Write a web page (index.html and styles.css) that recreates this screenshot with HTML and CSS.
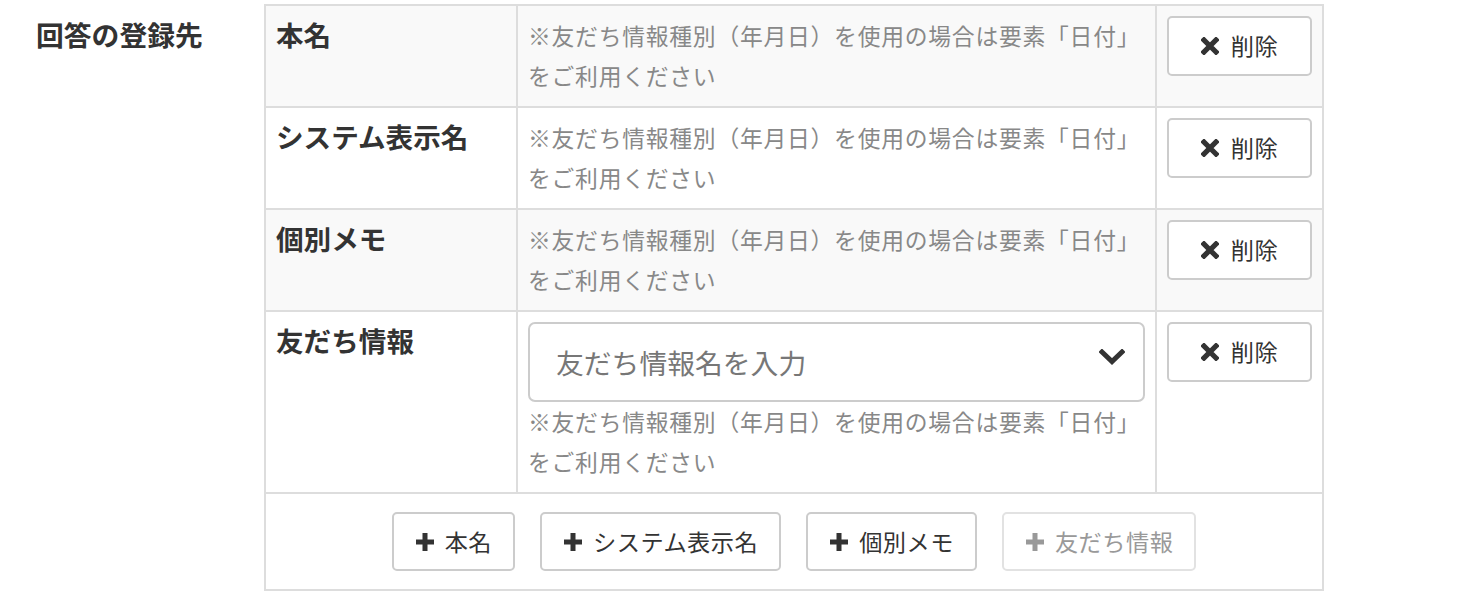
FILE: index.html
```html
<!DOCTYPE html>
<html lang="ja">
<head>
<meta charset="utf-8">
<title>回答の登録先</title>
<link rel="stylesheet" href="styles.css">
</head>
<body>
<div class="field">
  <div class="field-label">回答の登録先</div>
  <div class="grid">
    <div class="cell label striped">本名</div>
    <div class="cell note striped"><p class="help">※友だち情報種別（年月日）を使用の場合は要素「日付」をご利用ください</p></div>
    <div class="cell act striped"><button class="btn btn-block"><svg class="ico-x" viewBox="0 0 18 18"><path d="M3 3 L15 15 M15 3 L3 15"/></svg>削除</button></div>

    <div class="cell label">システム表示名</div>
    <div class="cell note"><p class="help">※友だち情報種別（年月日）を使用の場合は要素「日付」をご利用ください</p></div>
    <div class="cell act"><button class="btn btn-block"><svg class="ico-x" viewBox="0 0 18 18"><path d="M3 3 L15 15 M15 3 L3 15"/></svg>削除</button></div>

    <div class="cell label striped">個別メモ</div>
    <div class="cell note striped"><p class="help">※友だち情報種別（年月日）を使用の場合は要素「日付」をご利用ください</p></div>
    <div class="cell act striped"><button class="btn btn-block"><svg class="ico-x" viewBox="0 0 18 18"><path d="M3 3 L15 15 M15 3 L3 15"/></svg>削除</button></div>

    <div class="cell label white">友だち情報</div>
    <div class="cell note white">
      <div class="select">
        <span class="placeholder">友だち情報名を入力</span>
        <svg class="chev" viewBox="0 0 26 16"><path d="M3 3 L13 12.5 L23 3"/></svg>
      </div>
      <p class="help">※友だち情報種別（年月日）を使用の場合は要素「日付」をご利用ください</p>
    </div>
    <div class="cell act white"><button class="btn btn-block"><svg class="ico-x" viewBox="0 0 18 18"><path d="M3 3 L15 15 M15 3 L3 15"/></svg>削除</button></div>

    <div class="cell footer">
      <button class="btn"><svg class="ico-plus" viewBox="0 0 20 20"><path d="M10 1 V19 M1 10 H19"/></svg>本名</button>
      <button class="btn"><svg class="ico-plus" viewBox="0 0 20 20"><path d="M10 1 V19 M1 10 H19"/></svg>システム表示名</button>
      <button class="btn"><svg class="ico-plus" viewBox="0 0 20 20"><path d="M10 1 V19 M1 10 H19"/></svg>個別メモ</button>
      <button class="btn disabled"><svg class="ico-plus" viewBox="0 0 20 20"><path d="M10 1 V19 M1 10 H19"/></svg>友だち情報</button>
    </div>
  </div>
</div>
</body>
</html>
```

FILE: styles.css
```css
html, body {
  margin: 0;
  padding: 0;
  background: #fff;
}
body {
  font-family: "Noto Sans CJK JP", "Noto Sans", sans-serif;
  color: #333;
}
.field {
  display: flex;
  padding: 4px 0 0 36px;
}
.field-label {
  width: 228px;
  flex: none;
  padding-top: 10px;
  font-size: 27.8px;
  line-height: 40px;
  font-weight: 700;
  color: #333;
}
.grid {
  display: grid;
  grid-template-columns: 252px 639px 167px;
  border-top: 2px solid #ddd;
  border-left: 2px solid #ddd;
}
.cell {
  border-right: 2px solid #ddd;
  border-bottom: 2px solid #ddd;
  padding: 10px;
  background: #fff;
}
.striped { background: #f9f9f9; }
.label {
  padding-top: 8px;
  font-size: 27.6px;
  line-height: 40px;
  font-weight: 700;
  color: #333;
}
.help {
  margin: 0;
  font-size: 22.8px;
  line-height: 40px;
  color: #888;
  letter-spacing: 0.75px;
}
.btn {
  display: inline-flex;
  align-items: center;
  justify-content: center;
  height: 59px;
  padding: 0 21px;
  border: 2px solid #ccc;
  border-radius: 5px;
  background: #fff;
  color: #333;
  font-family: inherit;
  font-size: 23.2px;
  letter-spacing: 0.5px;
  line-height: 1;
  box-sizing: border-box;
  cursor: pointer;
}
.btn-block {
  width: 100%;
  height: 60px;
}
.btn.disabled {
  color: #999;
  border-color: #e2e2e2;
}
.ico-x {
  width: 18px;
  height: 18px;
  margin-right: 12px;
  fill: none;
  stroke: #333;
  stroke-width: 5.2;
  stroke-linecap: square;
}
.ico-plus {
  width: 20px;
  height: 20px;
  margin-right: 10px;
  fill: none;
  stroke: #333;
  stroke-width: 5;
}
.disabled .ico-plus { stroke: #999; }
.select {
  display: flex;
  align-items: center;
  justify-content: space-between;
  height: 80px;
  box-sizing: border-box;
  border: 2px solid #ccc;
  border-radius: 7px;
  padding: 0 18px 0 26px;
  background: #fff;
}
.placeholder {
  font-size: 27.8px;
  color: #777;
}
.chev {
  width: 26px;
  height: 16px;
  margin-bottom: 10px;
  fill: none;
  stroke: #333;
  stroke-width: 5;
  stroke-linecap: square;
}
.footer {
  grid-column: 1 / -1;
  display: flex;
  justify-content: center;
  gap: 25px;
  padding: 18px 10px 18px;
}
```
